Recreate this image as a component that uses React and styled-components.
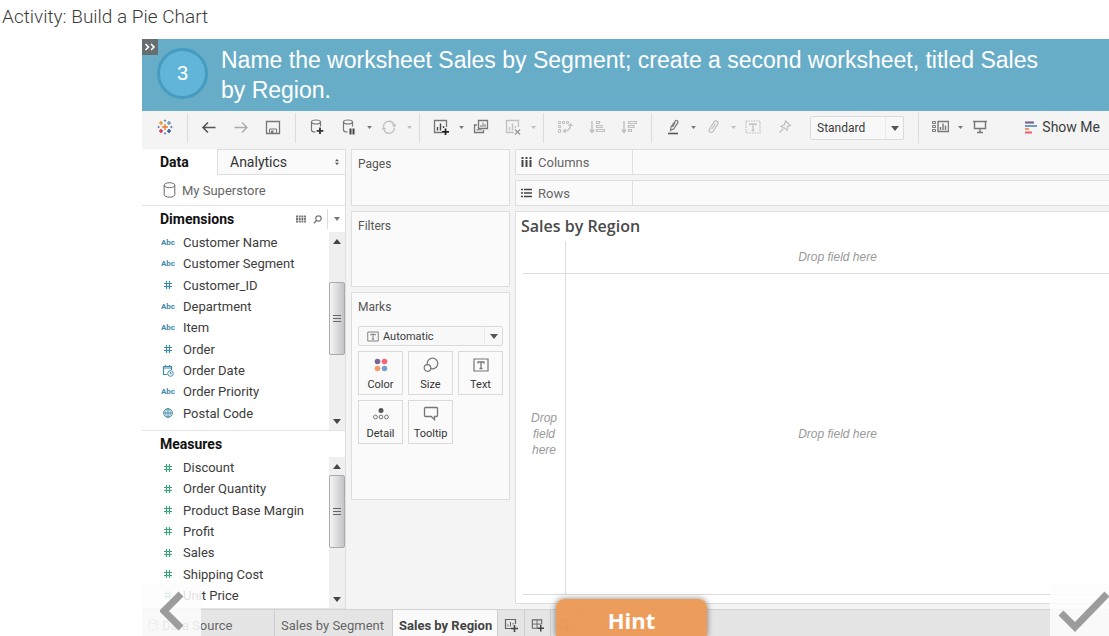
import styled, { createGlobalStyle, css } from "styled-components";

const GlobalStyle = createGlobalStyle`
  * { box-sizing: border-box; }
  body {
    margin: 0;
    background: #fff;
    color: #3c3c3c;
    font-family: Roboto, "Liberation Sans", sans-serif;
    font-size: 13px;
  }
  button, select { font: inherit; color: inherit; }
  h1, h2, h3, p, ul { margin: 0; padding: 0; }
`;

const Page = styled.div`
  display: flex;
  flex-direction: column;
  height: 100vh;
  min-height: 620px;
  overflow: hidden;
`;

const Heading = styled.h1`
  padding: 5px 2px 10px;
  font-size: 19px;
  font-weight: 300;
  line-height: 24px;
`;

const Player = styled.main`
  position: relative;
  flex: 1;
  min-height: 0;
  margin-left: 142px;
  display: flex;
  flex-direction: column;
  background: #f4f4f4;
  overflow: hidden;
`;

/* step banner */

const Banner = styled.section`
  display: flex;
  align-items: center;
  gap: 13px;
  height: 72px;
  flex: none;
  padding: 0 48px 0 15px;
  background: #68adc8;
  color: #fff;
  font-family: "Liberation Sans", Arial, sans-serif;
`;

const Collapse = styled.button`
  position: absolute;
  top: 0;
  left: 0;
  width: 16px;
  height: 16px;
  padding: 0;
  border: 0;
  display: grid;
  place-items: center;
  background: #666e72;
  color: #fff;
`;

const Step = styled.div`
  flex: none;
  width: 51px;
  height: 51px;
  margin-bottom: 4px;
  border: 3px solid #469cbe;
  border-radius: 50%;
  display: grid;
  place-items: center;
  background: #61b5d8;
  font-size: 20px;
`;

const Task = styled.p`
  font-size: 23px;
  line-height: 30px;
`;

/* toolbar */

const Toolbar = styled.div`
  display: flex;
  align-items: flex-start;
  height: 38px;
  flex: none;
  padding: 0 9px 0 7px;
`;

const ToolButton = styled.button`
  flex: none;
  width: 32px;
  height: 32px;
  padding: 0;
  border: 0;
  background: none;
  display: grid;
  place-items: center;
  color: ${props => (props.$dim ? "#c0c0c0" : "#777")};
`;

const CaretButton = styled(ToolButton)`
  width: 8px;
`;

const Divider = styled.span`
  flex: none;
  width: 12px;
  height: 30px;
  margin-top: 2px;
  display: flex;
  justify-content: center;

  &::before {
    content: "";
    width: 1px;
    background: #dcdcdc;
  }
`;

const ShowMe = styled.button`
  margin-left: auto;
  height: 32px;
  padding: 0;
  border: 0;
  background: none;
  display: flex;
  align-items: center;
  gap: 5px;
  font-size: 14px;
  white-space: nowrap;
`;

const SelectBox = styled.label`
  display: flex;
  align-items: stretch;
  border: 1px solid #dadada;
  background: #f8f8f8;
  border-radius: 2px;
  font-size: 12px;

  ${props =>
    props.$toolbar
      ? css`
          flex: none;
          width: 94px;
          height: 24px;
          margin: 5px 8px 0 9px;
        `
      : css`
          height: 20px;
          font-size: 11px;
          margin-bottom: 5px;
        `}
`;

const SelectIcon = styled.span`
  display: grid;
  place-items: center;
  padding-left: 8px;
  color: #777;
`;

const Select = styled.select`
  appearance: none;
  flex: 1;
  min-width: 0;
  padding: 0 0 0 ${props => (props.$pad || "6px")};
  border: 0;
  background: none;
`;

const SelectCaret = styled.span`
  width: 18px;
  border-left: 1px solid #ebebeb;
  display: grid;
  place-items: center;
  color: #555;
  pointer-events: none;
`;

/* workspace */

const Workspace = styled.div`
  flex: 1;
  min-height: 0;
  display: grid;
  grid-template-columns: 204px 159px minmax(0, 1fr);
  column-gap: 5px;
`;

const Sidebar = styled.aside`
  display: flex;
  flex-direction: column;
  min-height: 0;
  background: #fff;
  border-right: 1px solid #dedede;
`;

const PaneTabs = styled.div`
  display: flex;
  height: 26px;
  flex: none;
`;

const PaneTab = styled.button`
  display: flex;
  align-items: center;
  justify-content: space-between;
  border: 0;
  padding: 0 0 0 18px;
  width: 75px;
  background: #fff;
  color: #111;
  font-size: 14px;
  font-weight: 700;

  ${props =>
    props.$idle &&
    css`
      flex: 1;
      padding: 0 5px 0 12px;
      border: solid #dedede;
      border-width: 1px 0 1px 1px;
      background: #fafafa;
      color: #333;
      font-weight: 400;
    `}
`;

const Source = styled.div`
  display: flex;
  align-items: center;
  gap: 6px;
  height: 31px;
  flex: none;
  padding-left: 21px;
  border-bottom: 1px solid #e4e4e4;
  color: #666;
`;

const GroupHeader = styled.div`
  display: flex;
  align-items: center;
  flex: none;
  height: 26px;
  padding-left: 18px;
`;

const GroupTitle = styled.h2`
  flex: 1;
  font-size: 14px;
  font-weight: 700;
  color: #111;
`;

const HeaderTool = styled.button`
  border: 0;
  padding: 0;
  width: 16px;
  height: 20px;
  background: none;
  display: grid;
  place-items: center;
  color: #777;

  ${props =>
    props.$menu &&
    css`
      width: 18px;
      margin-left: 2px;
      border-left: 1px solid #dcdcdc;
    `}
`;

const Group = styled.div`
  display: flex;
  flex: none;
  height: ${props => props.$height};
  border-bottom: 1px solid #e4e4e4;
`;

const FieldList = styled.ul`
  flex: 1;
  display: grid;
  grid-auto-rows: 1fr;
  height: ${props => props.$height};
  list-style: none;
`;

const Field = styled.li`
  display: flex;
  align-items: center;
  padding-left: 18px;
`;

const FieldType = styled.span`
  width: 16px;
  margin-right: 7px;
  display: grid;
  place-items: center;
  color: ${props => (props.$measure ? "#3fa37d" : "#3f8aa8")};
  font-size: 8px;
  font-weight: 700;
`;

const Track = styled.div`
  width: 16px;
  display: flex;
  flex-direction: column;
  background: #efefef;
  color: #444;
`;

const Arrow = styled.button`
  height: 18px;
  padding: 0;
  border: 0;
  background: none;
  display: grid;
  place-items: center;

  &:last-child { margin-top: auto; }
`;

const Thumb = styled.div`
  height: 73px;
  margin-top: ${props => props.$offset};
  border: 1px solid #aaa;
  border-radius: 2px;
  background: linear-gradient(90deg, #f4f4f4, #dcdcdf 50%, #c4c4c8);
  display: grid;
  place-items: center;
  color: #666;
`;

const Cards = styled.div`
  display: flex;
  flex-direction: column;
  gap: 5px;
`;

const Card = styled.section`
  height: ${props => props.$height};
  flex: none;
  padding: 5px 6px;
  border: 1px solid #dedede;
  background: #fafafa;
`;

const CardTitle = styled.h3`
  font-size: 12px;
  font-weight: 400;
  line-height: 18px;
  color: #555;
`;

const MarkTitle = styled(CardTitle)`
  margin-bottom: 10px;
`;

const MarkGrid = styled.div`
  display: grid;
  grid-template-columns: repeat(3, 1fr);
  gap: 5px;
`;

const MarkButton = styled.button`
  height: 44px;
  padding: 5px 0 0;
  border: 1px solid #dadada;
  background: #fafafa;
  display: flex;
  flex-direction: column;
  align-items: center;
  gap: 4px;
  color: #777;
  font-size: 11px;
  line-height: 16px;

  span { color: #333; }
`;

const View = styled.div`
  display: flex;
  flex-direction: column;
  gap: 5px;
  min-height: 0;
  padding-bottom: 5px;
`;

const Shelf = styled.div`
  flex: none;
  height: 26px;
  border: solid #dedede;
  border-width: 1px 0 1px 1px;
  background: #fafafa;
  display: flex;
`;

const ShelfLabel = styled.div`
  width: 117px;
  padding-left: 5px;
  border-right: 1px solid #dedede;
  display: flex;
  align-items: center;
  gap: 6px;
  color: #666;

  svg { color: #444; }
`;

const Sheet = styled.section`
  flex: 1;
  min-height: 0;
  border: solid #dedede;
  border-width: 1px 0 1px 1px;
  background: #fff;
  padding: 0 0 8px 7px;
  display: flex;
  flex-direction: column;
`;

const SheetTitle = styled.h2`
  height: 29px;
  margin-left: -2px;
  font-family: "Open Sans", sans-serif;
  font-size: 16px;
  font-weight: 600;
  line-height: 29px;
  color: #4a4a4a;
`;

const DropGrid = styled.div`
  flex: 1;
  display: grid;
  grid-template-columns: 43px 1fr;
  grid-template-rows: 33px 1fr;
  border-bottom: 1px solid #dcdcdc;
`;

const Drop = styled.div`
  display: grid;
  place-items: center;
  text-align: center;
  color: #999;
  font-family: "Liberation Sans", Arial, sans-serif;
  font-size: 12px;
  font-style: italic;
  line-height: 16px;
  border: solid #dcdcdc;
  border-width: 0 ${props => (props.$right ? "1px" : "0")}
    ${props => (props.$bottom ? "1px" : "0")} 0;
`;

/* worksheet tabs */

const SheetTabs = styled.nav`
  display: flex;
  flex: none;
  height: 27px;
  border-top: 1px solid #d2d2d2;
  background: #e5e5e5;
`;

const SheetTab = styled.button`
  flex: none;
  display: flex;
  align-items: center;
  gap: 4px;
  padding: 4px 6px 0;
  border: 0;
  border-right: 1px solid #cfcfcf;
  width: ${props => props.$width};
  background: ${props => (props.$active ? "#fafafa" : "none")};
  color: ${props => (props.$active ? "#444" : "#666")};
  font-weight: ${props => (props.$active ? 700 : 400)};
  white-space: nowrap;
`;

/* player controls laid over the workbook */

const PageButton = styled.button`
  position: absolute;
  bottom: 0;
  ${props => (props.$next ? "right: 0;" : "left: 0;")}
  width: 59px;
  height: 53px;
  padding: 0;
  border: 0;
  border-radius: ${props => (props.$next ? "8px 0 0 0" : "0 8px 0 0")};
  background: rgba(253, 253, 253, 0.85);
  display: grid;
  align-items: center;
  justify-items: ${props => (props.$next ? "end" : "center")};
  color: #9c9c9c;
`;

const Hint = styled.button`
  position: absolute;
  left: 414px;
  bottom: 0;
  width: 151px;
  height: 37px;
  padding: 4px 0 0;
  border: 0;
  border-radius: 8px 8px 0 0;
  background: rgba(236, 154, 86, 0.97);
  box-shadow: 0 0 6px rgba(0, 0, 0, 0.5);
  color: #fff;
  font-family: "Open Sans", sans-serif;
  font-size: 22px;
  font-weight: 700;
  line-height: 30px;
`;

/* drawings */

const Icon = ({ w = 16, h = 16, children }) => (
  <svg width={w} height={h} viewBox={`0 0 ${w} ${h}`} fill="none" stroke="currentColor" aria-hidden="true">
    {children}
  </svg>
);

const Caret = ({ up, small }) => (
  <svg width={small ? 5 : 8} height={small ? 3 : 5} viewBox="0 0 8 5" fill="currentColor" aria-hidden="true">
    <path d={up ? "M0 5h8L4 0z" : "M0 0h8L4 5z"} />
  </svg>
);

const Logo = () => (
  <Icon>
    <path d="M8 5v6M5 8h6" stroke="#eb7b32" strokeWidth="1.4" />
    <path d="M4 2v4M2 4h4" stroke="#e8a33a" strokeWidth="1.6" />
    <path d="M12 2v4M10 4h4" stroke="#7a9cb0" strokeWidth="1.6" />
    <path d="M4 10v4M2 12h4" stroke="#d8375a" strokeWidth="1.6" />
    <path d="M12 10v4M10 12h4" stroke="#3a5c95" strokeWidth="1.6" />
    <path d="M8 .5v2.500M6.800 1.500h2.400M8 13v2.500M6.800 14.500h2.400" stroke="#6f86b5" />
    <path d="M1.500 6.800v2.400M.5 8H3M14.500 6.800v2.400M13 8h2.500" stroke="#6f86b5" />
  </Icon>
);

const Back = () => (
  <Icon>
    <path d="M14.500 8.500H2M7 3.500L2 8.500l5 5" strokeWidth="1.6" stroke="#555" />
  </Icon>
);

const Forward = () => (
  <Icon>
    <path d="M1.500 8.500H14M9 3.500l5 5-5 5" stroke="#aaa" strokeWidth="1.3" />
  </Icon>
);

const Save = () => (
  <Icon>
    <path d="M1.500 2.500h13v12h-13z" strokeWidth="1.3" />
    <path d="M4.500 14v-4h7v4" />
    <path d="M6 11.500h2.500v3H6z" fill="currentColor" stroke="none" />
  </Icon>
);

const Cylinder = ({ w = 12, h = 16 }) => (
  <svg width={w} height={h} viewBox="0 0 12 16" fill="none" stroke="currentColor" aria-hidden="true">
    <ellipse cx="6" cy="3.200" rx="5.300" ry="2.500" />
    <path d="M.7 3.200v9.500c0 1.400 2.400 2.500 5.300 2.500s5.300-1.100 5.300-2.500V3.200" />
  </svg>
);

const Database = ({ pause }) => (
  <Icon>
    <ellipse cx="7" cy="3" rx="4.500" ry="2" strokeWidth="1.200" />
    <path d="M2.500 3v8c0 1.200 1.500 2 4 2M11.500 3v4.500" strokeWidth="1.200" />
    {pause ? (
      <path d="M9.500 9.500v6M12.500 9.500v6" stroke="#444" strokeWidth="2" />
    ) : (
      <path d="M11 8.500V15M7.700 11.800h6.600" stroke="#333" strokeWidth="1.800" />
    )}
  </Icon>
);

const Refresh = () => (
  <Icon>
    <path d="M2.500 7.500a5.500 5.500 0 0 1 10.500-2M13.500 9A5.500 5.500 0 0 1 3 11" strokeWidth="1.300" />
    <path d="M10.500 5.500h5l-2 3zM5.500 10.500h-5l2-3z" fill="currentColor" stroke="none" />
  </Icon>
);

const NewSheet = ({ clear }) => (
  <Icon>
    <path d="M9 13.500H1.500v-12h12V8" strokeWidth="1.300" />
    <path d="M4.500 11.500V8M7.500 11.500V4.500M10.500 9V7" stroke={clear ? "currentColor" : "#444"} strokeWidth="1.400" />
    {clear ? (
      <path d="M10 10.500l5 5M15 10.500l-5 5" stroke="#999" strokeWidth="1.400" />
    ) : (
      <path d="M12.500 9.500v6.500M9 12.800h7" stroke="#222" strokeWidth="1.800" />
    )}
  </Icon>
);

const Duplicate = () => (
  <Icon>
    <path d="M5.500 1.500h9v8h-9zM4 6H1.500v7.500h9V11" strokeWidth="1.300" />
    <path d="M8 8V6M10 8V3.500M12 8V5" />
    <path d="M3.500 10.800h5" />
  </Icon>
);

const Swap = () => (
  <Icon>
    <path d="M1.500 2.500h2v2h-2zM5.500 2.500h2v2h-2zM9.500 2.500h2v2h-2zM1.500 6.500h2v2h-2zM1.500 10.500h2v3h-2z" />
    <path d="M13.500 6c0 4.500-2 6-6.500 6" strokeWidth="1.300" />
    <path d="M11 7l2.500-3L16 7zM8.500 9.500L5.500 12l3 2.500z" fill="currentColor" stroke="none" />
  </Icon>
);

const Sort = ({ desc }) => (
  <Icon>
    <path d="M3 2v11M.8 10.500L3 13.500l2.200-3" strokeWidth="1.400" />
    <path
      d={
        desc
          ? "M7.500 2.500h8v2h-8zM7.500 6.500h5.500v2H7.500zM7.500 10.500h3v2h-3z"
          : "M7.500 2.500h3v2h-3zM7.500 6.500h5.500v2H7.500zM7.500 10.500h8v2h-8z"
      }
      strokeWidth="1.200"
    />
  </Icon>
);

const Pen = () => (
  <Icon>
    <path d="M5.500 11.500l.5-3.500 4.500-6.200c1-.8 2.900.2 2.500 1.600L8.800 9.800zM10 3.500L7.500 8" strokeWidth="1.200" />
    <path d="M3 14.500h10" stroke="#555" strokeWidth="1.600" />
  </Icon>
);

const Clip = () => (
  <Icon>
    <path d="M4.500 10l4.500-7c1.600-2.200 5-.6 3.800 1.900L8.500 12c-1.700 2.600-5.700 1-4-2zM6.500 10.500l4-6" strokeWidth="1.300" />
  </Icon>
);

const TextBox = ({ dashed, w = 16, h = 14 }) => (
  <svg width={w} height={h} viewBox="0 0 16 14" fill="none" stroke="currentColor" aria-hidden="true">
    <path d="M1 1h14v12H1z" strokeWidth="1.200" strokeDasharray={dashed ? "1.500 1" : undefined} />
    <path d="M5 5.500V4h6v1.500M8 4v6.500M6.500 10.500h3" strokeWidth="1.300" />
  </svg>
);

const Pin = () => (
  <Icon>
    <path d="M8.500 2l5 4.500-3 .8-.5 4-2.300-2.300L4 7.500l3.500-2zM6.500 9.500L2.500 13.500" strokeWidth="1.200" />
  </Icon>
);

const CardsIcon = () => (
  <Icon w={18}>
    <path d="M7 2.500h10.500v10H7z" strokeWidth="1.400" />
    <path d="M9.500 11V8M12 11V4.500M14.500 11V6.500" strokeWidth="1.400" />
    <path d="M1.500 2.500h3v2h-3zM1.500 6.500h3v2h-3zM1.500 10.500h3v2h-3z" />
  </Icon>
);

const Present = () => (
  <Icon>
    <path d="M1 2.500h14M2.500 3v6.500h11V3M8 9.500v4M5 13.500h6" strokeWidth="1.400" />
  </Icon>
);

const ShowMeIcon = () => (
  <Icon w={12} h={13}>
    <path d="M0 1.500h9" stroke="#745c87" strokeWidth="2" />
    <path d="M0 5h12" stroke="#6f9ac4" strokeWidth="2" />
    <path d="M0 8h4" stroke="#ef9a66" strokeWidth="2" />
    <path d="M0 11.500h7" stroke="#f2596a" strokeWidth="2" />
  </Icon>
);

const Hash = () => (
  <Icon w={10} h={10}>
    <path d="M3.500 1v8M6.500 1v8M1 3.500h8M1 6.500h8" strokeWidth="1.200" />
  </Icon>
);

const DateIcon = () => (
  <Icon w={12} h={12}>
    <path d="M5 9.500H1.500v-8h8V5M1.500 3h8M3.500 0v2M7.500 0v2" strokeWidth="1.200" />
    <circle cx="8.500" cy="8.500" r="2.800" />
    <path d="M8.500 7v1.700h1.200" />
  </Icon>
);

const Globe = () => (
  <Icon w={10} h={10}>
    <circle cx="5" cy="5" r="4.300" />
    <path d="M5 .5v9M.5 5h9" />
    <ellipse cx="5" cy="5" rx="2.200" ry="4.300" strokeWidth=".7" />
  </Icon>
);

const ColorDots = () => (
  <Icon>
    <g stroke="none">
      <circle cx="4.500" cy="4.500" r="2.800" fill="#7b6591" />
      <circle cx="11.500" cy="4.500" r="2.800" fill="#fa6479" />
      <circle cx="4.500" cy="11.500" r="2.800" fill="#f59b6c" />
      <circle cx="11.500" cy="11.500" r="2.800" fill="#76a0cc" />
    </g>
  </Icon>
);

const SizeIcon = () => (
  <Icon>
    <circle cx="9.500" cy="6.500" r="5.300" strokeWidth="1.200" />
    <circle cx="4.500" cy="11" r="3.300" strokeWidth="1.200" fill="#fafafa" />
  </Icon>
);

const DetailIcon = () => (
  <Icon>
    <circle cx="8" cy="4.500" r="2.500" fill="#555" stroke="none" />
    <circle cx="2.500" cy="11" r="1.900" />
    <circle cx="8" cy="11" r="1.900" />
    <circle cx="13.500" cy="11" r="1.900" />
  </Icon>
);

const TooltipIcon = () => (
  <Icon>
    <path d="M1.500 2.500q0-1 1-1h11q1 0 1 1v7q0 1-1 1h-2v3.200l-3.200-3.200H2.500q-1 0-1-1z" strokeWidth="1.300" />
  </Icon>
);

const NewTab = ({ kind }) => (
  <Icon w={14} h={14}>
    {kind === "story" ? (
      <path d="M8 11L6 9.500 1.500 11V2L6 1l4.500 1V7M6 1v8" />
    ) : (
      <path d="M7 10.500H1.500v-9h10V6" strokeWidth="1.200" />
    )}
    {kind === "sheet" && <path d="M4 8.500V6.500M6.500 8.500V4M9 6.500V5" />}
    {kind === "dashboard" && <path d="M6.500 1.500v9M1.500 6h10" />}
    <path d="M10.500 7v7M7 10.500h7" stroke="#444" strokeWidth="1.600" />
  </Icon>
);

const typeIcons = { text: "Abc", number: <Hash />, date: <DateIcon />, geo: <Globe /> };

const dimensions = [
  ["Customer Name", "text"],
  ["Customer Segment", "text"],
  ["Customer_ID", "number"],
  ["Department", "text"],
  ["Item", "text"],
  ["Order", "number"],
  ["Order Date", "date"],
  ["Order Priority", "text"],
  ["Postal Code", "geo"],
];

const measures = [
  "Discount",
  "Order Quantity",
  "Product Base Margin",
  "Profit",
  "Sales",
  "Shipping Cost",
  "Unit Price",
].map(name => [name, "number"]);

const marks = [
  ["Color", <ColorDots />],
  ["Size", <SizeIcon />],
  ["Text", <TextBox h={16} />],
  ["Detail", <DetailIcon />],
  ["Tooltip", <TooltipIcon />],
];

const Tool = ({ label, dim, menu, children }) => (
  <>
    <ToolButton aria-label={label} $dim={dim}>
      {children}
    </ToolButton>
    {menu && (
      <CaretButton aria-label={`${label} options`} $dim={dim}>
        <Caret small />
      </CaretButton>
    )}
  </>
);

const Fields = ({ items, measure, height, listHeight, offset }) => (
  <Group $height={height}>
    <FieldList $height={listHeight}>
      {items.map(([name, type]) => (
        <Field key={name}>
          <FieldType $measure={measure}>{typeIcons[type]}</FieldType>
          {name}
        </Field>
      ))}
    </FieldList>
    <Track>
      <Arrow aria-label="Scroll up">
        <Caret up />
      </Arrow>
      <Thumb $offset={offset}>
        <Icon w={8} h={10}>
          <path d="M0 1.500h8M0 4.500h8M0 7.500h8" />
        </Icon>
      </Thumb>
      <Arrow aria-label="Scroll down">
        <Caret />
      </Arrow>
    </Track>
  </Group>
);

const App = () => (
  <Page>
    <GlobalStyle />
    <Heading>Activity: Build a Pie Chart</Heading>
    <Player>
      <Banner>
        <Step>3</Step>
        <Task>
          Name the worksheet Sales by Segment; create a second worksheet, titled Sales by Region.
        </Task>
      </Banner>
      <Collapse aria-label="Collapse instructions">
        <Icon w={12} h={8}>
          <path d="M1.500 1L4.500 4l-3 3M7 1l3 3-3 3" strokeWidth="1.600" />
        </Icon>
      </Collapse>

      <Toolbar>
        <Tool label="Start page"><Logo /></Tool>
        <Divider />
        <Tool label="Undo"><Back /></Tool>
        <Tool label="Redo"><Forward /></Tool>
        <Tool label="Save"><Save /></Tool>
        <Divider />
        <Tool label="New data source"><Database /></Tool>
        <Tool label="Pause updates" menu><Database pause /></Tool>
        <Tool label="Run update" dim menu><Refresh /></Tool>
        <Divider />
        <Tool label="New worksheet" menu><NewSheet /></Tool>
        <Tool label="Duplicate"><Duplicate /></Tool>
        <Tool label="Clear sheet" dim menu><NewSheet clear /></Tool>
        <Divider />
        <Tool label="Swap" dim><Swap /></Tool>
        <Tool label="Sort ascending" dim><Sort /></Tool>
        <Tool label="Sort descending" dim><Sort desc /></Tool>
        <Divider />
        <Tool label="Highlight" menu><Pen /></Tool>
        <Tool label="Group" dim menu><Clip /></Tool>
        <Tool label="Mark labels" dim><TextBox dashed /></Tool>
        <Tool label="Fix axes" dim><Pin /></Tool>
        <SelectBox $toolbar>
          <Select aria-label="Fit">
            <option>Standard</option>
          </Select>
          <SelectCaret>
            <Caret />
          </SelectCaret>
        </SelectBox>
        <Divider />
        <Tool label="Cards" menu><CardsIcon /></Tool>
        <Tool label="Presentation mode"><Present /></Tool>
        <ShowMe>
          <ShowMeIcon />
          Show Me
        </ShowMe>
      </Toolbar>

      <Workspace>
        <Sidebar>
          <PaneTabs>
            <PaneTab>Data</PaneTab>
            <PaneTab $idle>
              Analytics
              <Icon w={6} h={8}>
                <path d="M1 3.300L3 1l2 2.300zM1 4.700L3 7l2-2.300z" fill="#555" stroke="none" />
              </Icon>
            </PaneTab>
          </PaneTabs>
          <Source>
            <Cylinder w={13} />
            My Superstore
          </Source>
          <GroupHeader>
            <GroupTitle>Dimensions</GroupTitle>
            <HeaderTool aria-label="View data">
              <Icon w={10} h={8}>
                <path d="M0 1.500h10M0 4h10M0 6.500h10" strokeWidth="1.800" strokeDasharray="2 .7" />
              </Icon>
            </HeaderTool>
            <HeaderTool aria-label="Find field">
              <Icon w={9} h={9}>
                <circle cx="5.500" cy="3.500" r="2.700" strokeWidth="1.200" />
                <path d="M3.500 5.500L.8 8.200" strokeWidth="1.300" />
              </Icon>
            </HeaderTool>
            <HeaderTool aria-label="Dimensions menu" $menu>
              <svg width="6" height="4" viewBox="0 0 6 4" fill="currentColor">
                <path d="M0 0h6L3 4z" />
              </svg>
            </HeaderTool>
          </GroupHeader>
          <Fields items={dimensions} height="199px" listHeight="192px" offset="32px" />
          <GroupHeader>
            <GroupTitle>Measures</GroupTitle>
          </GroupHeader>
          <Fields items={measures} measure height="152px" listHeight="149px" offset="0" />
        </Sidebar>

        <Cards>
          <Card $height="57px">
            <CardTitle>Pages</CardTitle>
          </Card>
          <Card $height="76px">
            <CardTitle>Filters</CardTitle>
          </Card>
          <Card $height="208px">
            <MarkTitle>Marks</MarkTitle>
            <SelectBox>
              <SelectIcon>
                <TextBox w={12} h={11} />
              </SelectIcon>
              <Select aria-label="Mark type" $pad="4px">
                <option>Automatic</option>
              </Select>
              <SelectCaret>
                <Caret />
              </SelectCaret>
            </SelectBox>
            <MarkGrid>
              {marks.map(([name, icon]) => (
                <MarkButton key={name}>
                  {icon}
                  <span>{name}</span>
                </MarkButton>
              ))}
            </MarkGrid>
          </Card>
        </Cards>

        <View>
          <Shelf>
            <ShelfLabel>
              <Icon w={11} h={11}>
                <path d="M1.500 0v10M5.500 0v10M9.500 0v10" strokeWidth="2" strokeDasharray="2 1 8" />
              </Icon>
              Columns
            </ShelfLabel>
          </Shelf>
          <Shelf>
            <ShelfLabel>
              <Icon w={11} h={11}>
                <path d="M0 1.500h11M0 5h11M0 8.500h11" strokeWidth="1.600" strokeDasharray="2 1 8" />
              </Icon>
              Rows
            </ShelfLabel>
          </Shelf>
          <Sheet>
            <SheetTitle>Sales by Region</SheetTitle>
            <DropGrid>
              <Drop $right $bottom />
              <Drop $bottom>Drop field here</Drop>
              <Drop $right>
                Drop
                <br />
                field
                <br />
                here
              </Drop>
              <Drop>Drop field here</Drop>
            </DropGrid>
          </Sheet>
        </View>
      </Workspace>

      <SheetTabs>
        <SheetTab $width="133px">
          <Cylinder w={10} h={12} />
          Data Source
        </SheetTab>
        <SheetTab $width="118px">Sales by Segment</SheetTab>
        <SheetTab $width="105px" $active>Sales by Region</SheetTab>
        <SheetTab $width="27px" aria-label="New worksheet"><NewTab kind="sheet" /></SheetTab>
        <SheetTab $width="26px" aria-label="New dashboard"><NewTab kind="dashboard" /></SheetTab>
        <SheetTab $width="26px" aria-label="New story"><NewTab kind="story" /></SheetTab>
      </SheetTabs>

      <PageButton aria-label="Previous">
        <Icon w={24} h={42}>
          <path d="M21 5L4 22l17 17" strokeWidth="7" />
        </Icon>
      </PageButton>
      <PageButton aria-label="Submit" $next>
        <Icon w={52} h={44}>
          <path d="M4 25l14 14L50 6" strokeWidth="7" />
        </Icon>
      </PageButton>
      <Hint>Hint</Hint>
    </Player>
  </Page>
);

export default App;
